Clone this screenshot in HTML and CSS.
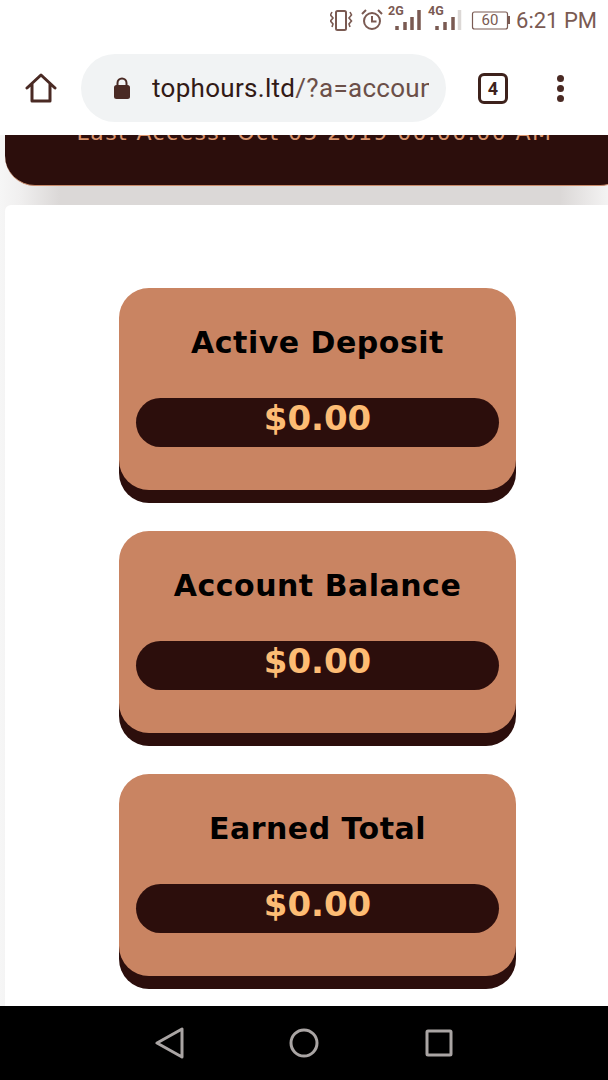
FILE: index.html
```html
<!DOCTYPE html>
<html lang="en">
<head>
<meta charset="utf-8">
<title>tophours.ltd</title>
<link rel="stylesheet" href="styles.css">
</head>
<body>
<div class="phone">
  <header class="status">
    <svg class="st-icon" width="188" height="34" viewBox="0 0 188 34" fill="none" stroke="#7a5a52">
      <rect x="6" y="11" width="10" height="19" rx="1.500" stroke-width="2"/>
      <path d="M2 12l-1.500 3 2.500 3-2.500 3 2.500 3-1 3M20 12l1.500 3-2.500 3 2.500 3-2.500 3 1 3" stroke-width="1.600"/>
      <circle cx="42" cy="21" r="8" stroke-width="2"/>
      <path d="M42 16v5.500h4.500M32 14l4-4M52 14l-4-4" stroke-width="2"/>
      <path d="M67 26v4M75 22v8M82 17v13M89 10v20" stroke-width="3.500"/>
      <path d="M107 26v4M115 22v8M123 17v13" stroke-width="3.500"/>
      <path d="M129.500 10v20" stroke="#dcd8d6" stroke-width="3.500"/>
      <rect x="142.500" y="12" width="35" height="17" rx="2" stroke-width="1.200"/>
      <path d="M179 16v8" stroke-width="2"/>
    </svg>
    <span class="net net-a">2G</span>
    <span class="net net-b">4G</span>
    <span class="batt">60</span>
    <span class="clock">6:21 PM</span>
  </header>

  <nav class="toolbar">
    <svg class="home" width="32" height="32" viewBox="0 0 32 32" fill="none" stroke="#4a2a24" stroke-width="3" stroke-linejoin="round" stroke-linecap="round">
      <path d="M2 16L16 3l14 13M7 12v17h18V12"/>
    </svg>
    <div class="omnibox">
      <svg class="lock" width="18" height="24" viewBox="0 0 18 24">
        <path d="M4.500 10V7a4.500 4.500 0 0 1 9 0v3" fill="none" stroke="#4a2a24" stroke-width="2"/>
        <rect x="1" y="9" width="16" height="14" rx="2.500" fill="#4a2a24"/>
      </svg>
      <div class="url"><span class="host">tophours.ltd</span><span class="path">/?a=account</span></div>
    </div>
    <div class="tabs">4</div>
    <div class="menu"><i></i><i></i><i></i></div>
  </nav>

  <main class="page">
    <section class="banner"><p class="access">Last Access: Oct 05 2019 00:00:00 AM</p></section>
    <section class="panel">
      <article class="card"><h2>Active Deposit</h2><div class="pill">$0.00</div></article>
      <article class="card"><h2>Account Balance</h2><div class="pill">$0.00</div></article>
      <article class="card"><h2>Earned Total</h2><div class="pill">$0.00</div></article>
    </section>
  </main>

  <footer class="navbar">
    <svg width="30" height="32" viewBox="0 0 30 32" fill="none" stroke="#aaa5a4" stroke-width="3" stroke-linejoin="round"><path d="M27 2v28L2 16z"/></svg>
    <svg class="nav-home" width="30" height="30" viewBox="0 0 30 30" fill="none" stroke="#aaa5a4" stroke-width="3"><circle cx="15" cy="15" r="13"/></svg>
    <svg width="28" height="28" viewBox="0 0 28 28" fill="none" stroke="#aaa5a4" stroke-width="3" stroke-linejoin="round"><rect x="2" y="2" width="24" height="24" rx="1"/></svg>
  </footer>
</div>
</body>
</html>
```
FILE: styles.css
```css
* { box-sizing: border-box; }
html, body { margin: 0; padding: 0; background: #fff; }
.phone {
  width: 608px;
  height: 1080px;
  display: flex;
  flex-direction: column;
  overflow: hidden;
  font-family: Roboto, "Liberation Sans", sans-serif;
}

/* status bar */
.status {
  position: relative;
  height: 40px;
  flex: none;
  display: flex;
  justify-content: flex-end;
  align-items: center;
  padding-right: 11px;
  color: #7a5a52;
}
.st-icon { position: absolute; left: 330px; top: 0; }
.net { position: absolute; font-size: 12.500px; font-weight: 700; top: 3px; }
.net-a { left: 388px; }
.net-b { left: 428px; }
.batt { position: absolute; left: 472px; top: 11px; width: 36px; text-align: center; font-size: 15px; }
.clock { font-size: 22px; }

/* toolbar */
.toolbar {
  height: 95px;
  flex: none;
  display: flex;
  align-items: center;
  padding: 1px 0 0 25px;
}
.home { flex: none; }
.omnibox {
  width: 365px;
  height: 68px;
  margin-left: 24px;
  border-radius: 34px;
  background: #f1f3f4;
  display: flex;
  align-items: center;
  padding-left: 32px;
  flex: none;
}
.lock { flex: none; }
.url {
  width: 277px;
  margin-left: 21px;
  overflow: hidden;
  white-space: nowrap;
  font-size: 26px;
  letter-spacing: 0.300px;
}
.host { color: #321a16; }
.path { color: #6b4f48; }
.tabs {
  width: 30px;
  height: 31px;
  margin-left: 32px;
  border: 3px solid #3e221c;
  border-radius: 6px;
  display: flex;
  align-items: center;
  justify-content: center;
  font-size: 18px;
  font-weight: 700;
  color: #3e221c;
  flex: none;
}
.menu {
  margin-left: 49px;
  display: flex;
  flex-direction: column;
  gap: 3px;
  flex: none;
}
.menu i { display: block; width: 7px; height: 7px; border-radius: 50%; background: #4a2a24; }

/* page */
.page {
  flex: 1;
  display: flex;
  flex-direction: column;
  background: linear-gradient(90deg, #f6f6f6 0, #f0efef 20px, #dbd8d7 60px, #dbd8d7 560px, #f4f3f3 608px);
  overflow: hidden;
}
.banner {
  height: 51px;
  margin: 0 -22px 0 5px;
  flex: none;
  background: #2c0e0c;
  border-radius: 0 0 30px 30px;
  border-bottom: 1px solid #c98a6a;
  display: flex;
  flex-direction: column;
  justify-content: flex-end;
  align-items: center;
  overflow: hidden;
  padding-bottom: 41px;
  padding-right: 6px;
}
.access {
  margin: 0;
  white-space: nowrap;
  font-family: "DejaVu Sans", sans-serif;
  font-size: 22px;
  letter-spacing: 1.400px;
  color: #d8946e;
  line-height: 22px;
  flex: none;
}
.panel {
  flex: 1;
  margin-top: 19px;
  margin-left: 5px;
  padding: 83px 92px 0 114px;
  background: #fff;
  border-radius: 6px 0 0 0;
  display: flex;
  flex-direction: column;
  gap: 41px;
}
.card {
  width: 397px;
  height: 202px;
  flex: none;
  padding: 36px 17px 0;
  background: #c98462;
  border-radius: 30px;
  box-shadow: 0 13px 0 #2c0e0c;
  text-align: center;
}
.card h2 {
  margin: 0;
  height: 38px;
  font-family: "DejaVu Sans", sans-serif;
  font-size: 30px;
  letter-spacing: 0.500px;
  line-height: 38px;
  font-weight: 700;
  color: #000;
  white-space: nowrap;
}
.pill {
  margin-top: 36px;
  height: 49px;
  border-radius: 25px;
  background: #2c0e0c;
  color: #fdbc74;
  font-family: "DejaVu Sans", sans-serif;
  font-size: 34px;
  font-weight: 700;
  line-height: 40px;
}

/* navigation */
.navbar {
  height: 74px;
  flex: none;
  background: #000;
  display: flex;
  align-items: center;
  padding: 0 0 1px 155px;
}
.nav-home { margin: 0 106px 0 104px; }
```
